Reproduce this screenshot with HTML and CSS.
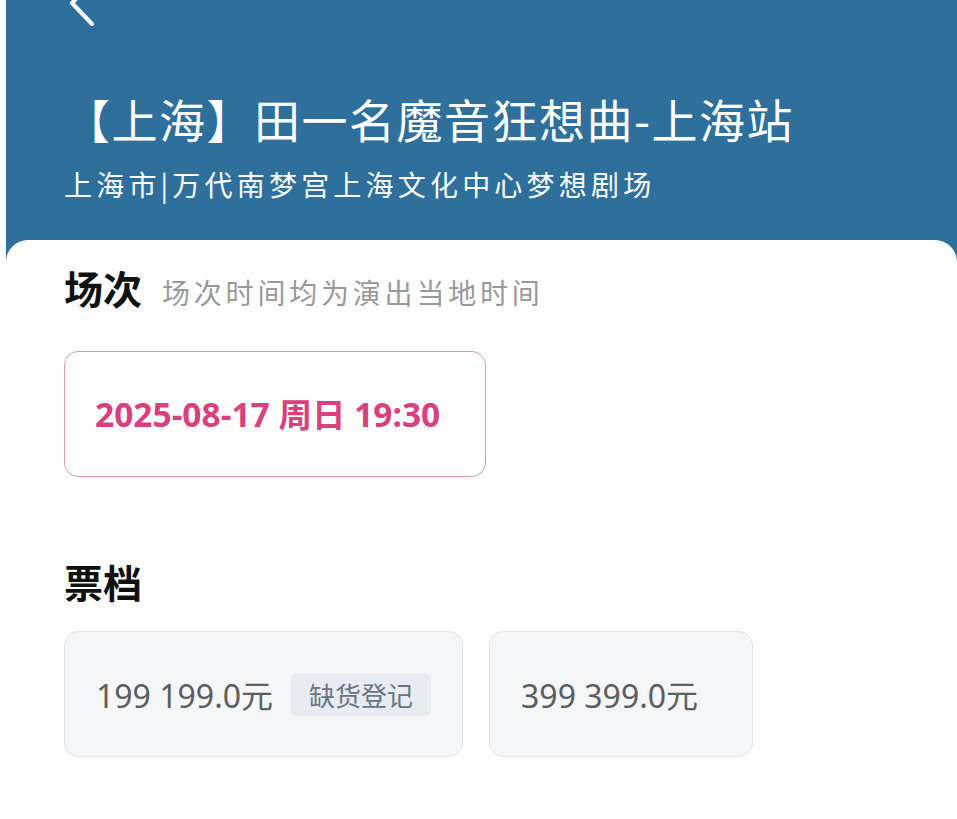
FILE: index.html
```html
<!DOCTYPE html>
<html>
<head>
<meta name="viewport" content="width=device-width, initial-scale=1">
<link rel="stylesheet" href="styles.css">
</head>
<body>

<div class="page">
  <div class="header">
    <svg class="back" width="30" height="28" viewBox="0 0 30 28">
      <polyline points="28,-20 6,3 26,24" fill="none" stroke="#fff" stroke-width="4" stroke-linecap="round" stroke-linejoin="round"/>
    </svg>
    <h1 class="title">【上海】田一名魔音狂想曲-上海站</h1>
    <p class="venue">上海市|万代南梦宫上海文化中心梦想剧场</p>
  </div>

  <div class="sheet">
    <div class="section-head">
      <h2>场次</h2>
      <span class="hint">场次时间均为演出当地时间</span>
    </div>
    <div class="sessions">
      <div class="session active">2025-08-17 周日 19:30</div>
    </div>

    <div class="section-head tickets-head">
      <h2>票档</h2>
    </div>
    <div class="tickets">
      <div class="ticket">
        <span class="price">199 199.0元</span>
        <span class="tag">缺货登记</span>
      </div>
      <div class="ticket">
        <span class="price">399 399.0元</span>
      </div>
    </div>
  </div>
</div>

</body>
</html>
```

FILE: styles.css
```css
* {
  box-sizing: border-box;
}

body {
  margin: 0;
  background: #fff;
  font-family: "Noto Sans", "Noto Sans CJK SC", sans-serif;
}

.page {
  margin-left: 6px;
}

/* Blue title area */
.header {
  background: #2e6f9c;
  color: #fff;
  padding: 0 0 67px 58px;
}

.back {
  display: block;
  margin-left: 2px;
}

.title {
  margin: 62px 0 0;
  font-family: "Noto Sans CJK SC", sans-serif;
  font-size: 46px;
  font-weight: 400;
  line-height: 56px;
  letter-spacing: 1.5px;
}

.venue {
  margin: 20px 0 0;
  font-family: "Noto Sans CJK SC", sans-serif;
  font-size: 28px;
  line-height: 36px;
  letter-spacing: 4.2px;
}

/* White sheet over the header */
.sheet {
  margin-top: -29px;
  background: #fff;
  border-radius: 22px 22px 0 0;
  padding: 23px 0 40px 58px;
}

.section-head {
  display: flex;
  align-items: baseline;
}

.section-head h2 {
  margin: 0;
  font-family: "Noto Sans CJK SC", sans-serif;
  font-size: 39px;
  font-weight: 700;
  line-height: 48px;
  color: #111;
}

.hint {
  margin-left: 20px;
  font-family: "Noto Sans CJK SC", sans-serif;
  font-size: 28px;
  letter-spacing: 3.8px;
  color: #999;
}

.sessions {
  margin-top: 39px;
}

.session {
  display: flex;
  align-items: center;
  width: 422px;
  height: 126px;
  padding: 0 0 4px 30px;
  border: 1.5px solid #e593b8;
  border-radius: 14px;
  font-size: 33.5px;
  font-weight: 700;
  color: #d8407f;
}

.tickets-head {
  margin-top: 80px;
}

.tickets {
  display: flex;
  gap: 26px;
  margin-top: 26px;
}

.ticket {
  display: flex;
  align-items: center;
  gap: 18px;
  min-width: 264px;
  height: 126px;
  padding: 0 31px;
  background: #f4f6f8;
  border: 1px solid #e3e5e8;
  border-radius: 14px;
}

.price {
  font-size: 32px;
  color: #5a5e63;
}

.tag {
  display: flex;
  align-items: center;
  height: 43px;
  padding: 0 18px;
  background: #e8ecf0;
  border-radius: 6px;
  font-family: "Noto Sans CJK SC", sans-serif;
  font-size: 26px;
  color: #6b7582;
}
```
